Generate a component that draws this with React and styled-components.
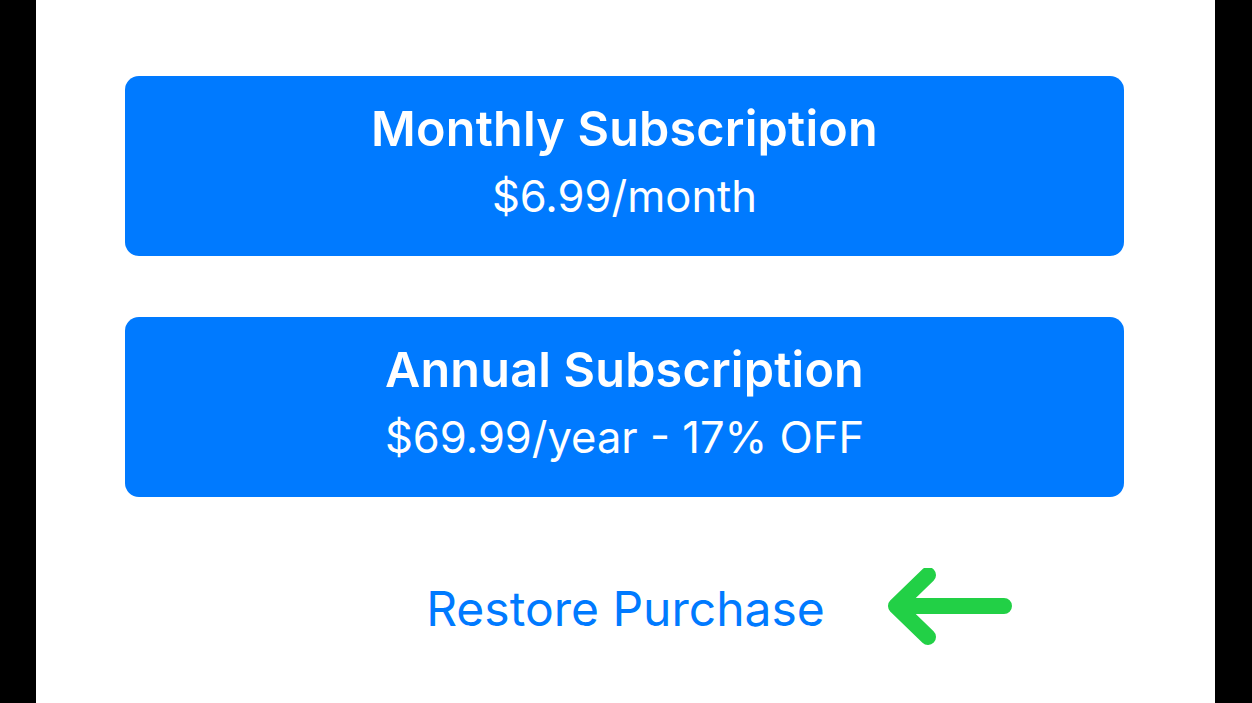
import React from "react";
import styled, { createGlobalStyle } from "styled-components";

const GlobalStyle = createGlobalStyle`
  html, body {
    margin: 0;
    padding: 0;
    background: #000;
  }
  body {
    font-family: Inter, "Noto Sans", "Liberation Sans", sans-serif;
  }
`;

const Screen = styled.div`
  display: flex;
  justify-content: center;
  width: 1252px;
  height: 703px;
  overflow: hidden;
`;

const Page = styled.div`
  width: 1179px;
  margin-left: 36px;
  margin-right: 37px;
  background: #fff;
  display: flex;
  flex-direction: column;
  align-items: center;
  padding-top: 76px;
  box-sizing: border-box;
`;

const PlanButton = styled.button`
  width: 999px;
  height: 180px;
  margin-left: -2px;
  margin-bottom: ${(p) => p.$gap || 0}px;
  border: none;
  border-radius: 14px;
  background: #007aff;
  color: #fff;
  display: flex;
  flex-direction: column;
  align-items: center;
  justify-content: center;
  font-family: inherit;
  cursor: pointer;
  padding: 0 0 10px;
`;

const PlanTitle = styled.span`
  font-size: 48.5px;
  font-weight: 600;
  line-height: 64px;
  letter-spacing: 0.2px;
  margin-bottom: 6px;
`;

const PlanPrice = styled.span`
  font-size: 43.5px;
  font-weight: 400;
  line-height: 58px;
`;

const RestoreRow = styled.div`
  position: relative;
  margin-top: 82px;
  display: flex;
  justify-content: center;
`;

const RestoreLink = styled.a`
  color: #007aff;
  font-size: 48px;
  line-height: 60px;
  font-weight: 400;
  text-decoration: none;
  cursor: pointer;
`;

const Arrow = styled.svg`
  position: absolute;
  left: calc(100% + 56px);
  top: -11px;
`;

export default function App() {
  return (
    <>
      <GlobalStyle />
      <Screen>
        <Page>
          <PlanButton $gap={61}>
            <PlanTitle>Monthly Subscription</PlanTitle>
            <PlanPrice>$6.99/month</PlanPrice>
          </PlanButton>
          <PlanButton>
            <PlanTitle>Annual Subscription</PlanTitle>
            <PlanPrice>$69.99/year - 17% OFF</PlanPrice>
          </PlanButton>
          <RestoreRow>
            <RestoreLink>Restore Purchase</RestoreLink>
            <Arrow width="140" height="90" viewBox="0 0 140 90">
              <path
                d="M123 38 H15 M15 38 L47 7 M15 38 L47 69"
                fill="none"
                stroke="#22d046"
                strokeWidth="16"
                strokeLinecap="round"
                strokeLinejoin="round"
              />
            </Arrow>
          </RestoreRow>
        </Page>
      </Screen>
    </>
  );
}
